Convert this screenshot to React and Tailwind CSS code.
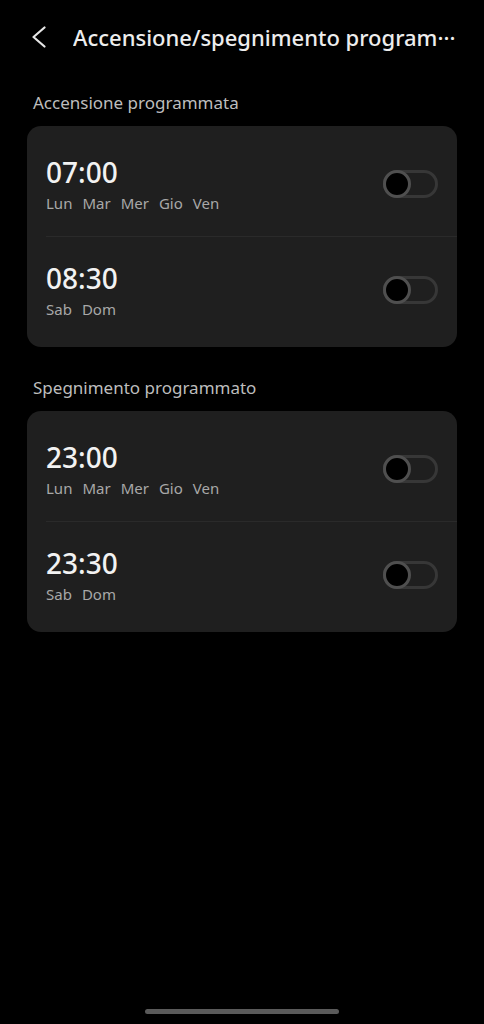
const sections = [
  {
    title: "Accensione programmata",
    items: [
      { time: "07:00", days: ["Lun", "Mar", "Mer", "Gio", "Ven"] },
      { time: "08:30", days: ["Sab", "Dom"] },
    ],
  },
  {
    title: "Spegnimento programmato",
    items: [
      { time: "23:00", days: ["Lun", "Mar", "Mer", "Gio", "Ven"] },
      { time: "23:30", days: ["Sab", "Dom"] },
    ],
  },
];

function Toggle() {
  return (
    <div className="relative w-[55px] h-[28px] rounded-full border-[3px] border-[#373737]">
      <div className="absolute -left-[3px] -top-[3px] w-[28px] h-[28px] rounded-full bg-black border-[3px] border-[#4f4f4f]" />
    </div>
  );
}

function Row({ time, days }) {
  return (
    <div className="flex items-center justify-between h-[105px] pl-[19px] pr-[19px]">
      <div className="flex flex-col">
        <span className="text-[28px] leading-[34px] font-medium text-[#f2f2f2]">{time}</span>
        <div className="flex gap-[10px] text-[15px] leading-[20px] text-[#a8a8a8] mt-[4px]">
          {days.map((d) => (
            <span key={d}>{d}</span>
          ))}
        </div>
      </div>
      <Toggle />
    </div>
  );
}

export default function App() {
  return (
    <div
      className="w-[484px] h-[1024px] bg-black flex flex-col"
      style={{ fontFamily: '"Noto Sans", "Open Sans", sans-serif' }}
    >
      <div className="flex items-center h-[74px] pl-[32px]">
        <svg width="14" height="22" viewBox="0 0 14 22" fill="none" className="text-[#e6e6e6]">
          <polyline points="12.5,1.5 1.5,11 12.5,20.5" stroke="currentColor" strokeWidth="2.2" strokeLinecap="round" strokeLinejoin="round" />
        </svg>
        <span className="ml-[27px] text-[22px] font-medium text-[#ededed] truncate">
          Accensione/spegnimento program···
        </span>
      </div>

      {sections.map((s, i) => (
        <div key={s.title} className={i === 0 ? "mt-[17px]" : "mt-[29px]"}>
          <div className="pl-[33px] text-[17px] leading-[24px] text-[#bdbdbd]">{s.title}</div>
          <div className="mx-[27px] mt-[11px] py-[5px] rounded-[14px] bg-[#1f1f1f]">
            {s.items.map((it, j) => (
              <div key={it.time}>
                {j > 0 && <div className="ml-[19px] h-px bg-[#2a2a2a]" />}
                <Row {...it} />
              </div>
            ))}
          </div>
        </div>
      ))}

      <div className="mt-auto mb-[10px] mx-auto w-[194px] h-[5px] rounded-full bg-[#5a5a5a]" />
    </div>
  );
}
